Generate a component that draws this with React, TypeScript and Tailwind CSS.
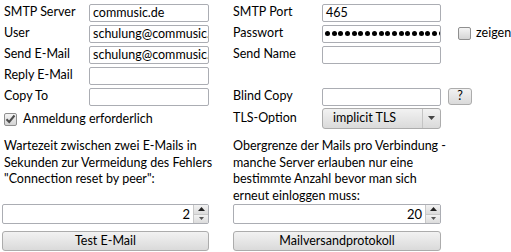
import React from 'react';

const font = { fontFamily: 'Lato, "Open Sans", sans-serif' };

const Field = ({ value = '', width = 'w-[120px]' }: { value?: string; width?: string }) => (
  <div
    className={`${width} h-[18px] border border-[#abadb3] rounded-[2px] bg-white px-[3px] overflow-hidden whitespace-nowrap leading-[16px]`}
  >
    {value}
  </div>
);

const Row = ({ label, labelW, children }: { label: string; labelW: string; children?: React.ReactNode }) => (
  <div className="flex items-center h-[21px]">
    <div className={`${labelW} shrink-0`}>{label}</div>
    {children}
  </div>
);

const CheckBox = ({ checked = false }: { checked?: boolean }) => (
  <div className="w-[13px] h-[13px] rounded-[2px] border border-[#8f8f8f] bg-gradient-to-b from-[#f4f4f4] to-[#d4d4d4] flex items-center justify-center">
    {checked && (
      <svg width="11" height="10" viewBox="0 0 11 10">
        <path d="M1.5 5.2 L4.2 8 L9.5 1.5" fill="none" stroke="#4d4d4d" strokeWidth="2" />
      </svg>
    )}
  </div>
);

const Spin = ({ value }: { value: string }) => (
  <div className="flex h-[20px] border border-[#abadb3] rounded-[2px] bg-white overflow-hidden">
    <div className="flex-1 text-right pr-[3px] leading-[18px] text-[13px]">{value}</div>
    <div className="w-[15px] flex flex-col border-l border-[#c8c8c8]">
      <div className="flex-1 flex items-center justify-center bg-gradient-to-b from-[#f2f2f2] to-[#dcdcdc] border-b border-[#c8c8c8]">
        <svg width="7" height="4" viewBox="0 0 7 4">
          <path d="M0 4 L3.5 0 L7 4 Z" fill="#222" />
        </svg>
      </div>
      <div className="flex-1 flex items-center justify-center bg-gradient-to-b from-[#f2f2f2] to-[#dcdcdc]">
        <svg width="5" height="3" viewBox="0 0 5 3">
          <path d="M0 0 L2.5 3 L5 0 Z" fill="#555" />
        </svg>
      </div>
    </div>
  </div>
);

const Button = ({ children, className = '' }: { children: React.ReactNode; className?: string }) => (
  <div
    className={`flex items-center justify-center border border-[#acacac] rounded-[3px] bg-gradient-to-b from-[#f2f2f2] to-[#dadada] ${className}`}
  >
    {children}
  </div>
);

export default function App() {
  return (
    <div className="w-[511px] h-[252px] bg-white text-black text-[12.5px] pl-[2px] pt-[2px] overflow-hidden" style={font}>
      <div className="flex gap-[24px]">
        <div className="w-[207px] flex flex-col">
          <Row label="SMTP Server" labelW="w-[87px] pl-[2px]">
            <Field value="commusic.de" />
          </Row>
          <Row label="User" labelW="w-[87px] pl-[2px]">
            <Field value="schulung@commusic.de" />
          </Row>
          <Row label="Send E-Mail" labelW="w-[87px] pl-[2px]">
            <Field value="schulung@commusic.de" />
          </Row>
          <Row label="Reply E-Mail" labelW="w-[87px] pl-[2px]">
            <Field />
          </Row>
          <Row label="Copy To" labelW="w-[87px] pl-[2px]">
            <Field />
          </Row>
          <div className="flex items-center h-[22px] mt-[1px] pl-[2px] gap-[6px]">
            <CheckBox checked />
            <span>Anmeldung erforderlich</span>
          </div>
        </div>
        <div className="flex flex-col">
          <Row label="SMTP Port" labelW="w-[89px]">
            <Field value="465" width="w-[119px]" />
          </Row>
          <Row label="Passwort" labelW="w-[89px]">
            <div className="w-[119px] h-[18px] border border-[#abadb3] rounded-[2px] bg-white pl-[2px] overflow-hidden flex items-center gap-[1.7px]">
              {Array.from({ length: 19 }).map((_, i) => (
                <div key={i} className="w-[5px] h-[5px] shrink-0 rounded-full bg-black" />
              ))}
            </div>
            <div className="ml-[17px] mr-[5px]">
              <CheckBox />
            </div>
            <span>zeigen</span>
          </Row>
          <Row label="Send Name" labelW="w-[89px]">
            <Field width="w-[119px]" />
          </Row>
          <div className="h-[21px]" />
          <Row label="Blind Copy" labelW="w-[89px]">
            <Field width="w-[119px]" />
            <Button className="ml-[7px] w-[24px] h-[17px]">?</Button>
          </Row>
          <div className="flex items-center h-[22px]">
            <div className="w-[89px] shrink-0">TLS-Option</div>
            <Button className="w-[119px] h-[21px] !justify-start">
              <span className="flex-1 pl-[10px]">implicit TLS</span>
              <span className="w-[18px] h-full border-l border-[#c4c4c4] flex items-center justify-center">
                <svg width="7" height="4" viewBox="0 0 7 4">
                  <path d="M0 0 L3.5 4 L7 0 Z" fill="#444" />
                </svg>
              </span>
            </Button>
          </div>
        </div>
      </div>

      <div className="grid grid-cols-[207px_208px] gap-x-[24px] mt-[8px]">
        <div className="h-[66px] pl-[2px] leading-[16.5px] whitespace-nowrap">
          Wartezeit zwischen zwei E-Mails in
          <br />
          Sekunden zur Vermeidung des Fehlers
          <br />
          "Connection reset by peer":
        </div>
        <div className="h-[66px] leading-[16.5px] whitespace-nowrap">
          Obergrenze der Mails pro Verbindung -
          <br />
          manche Server erlauben nur eine
          <br />
          bestimmte Anzahl bevor man sich
          <br />
          erneut einloggen muss:
        </div>
        <Spin value="2" />
        <Spin value="20" />
        <Button className="h-[20px] mt-[7px]">Test E-Mail</Button>
        <Button className="h-[20px] mt-[7px]">Mailversandprotokoll</Button>
      </div>
    </div>
  );
}
